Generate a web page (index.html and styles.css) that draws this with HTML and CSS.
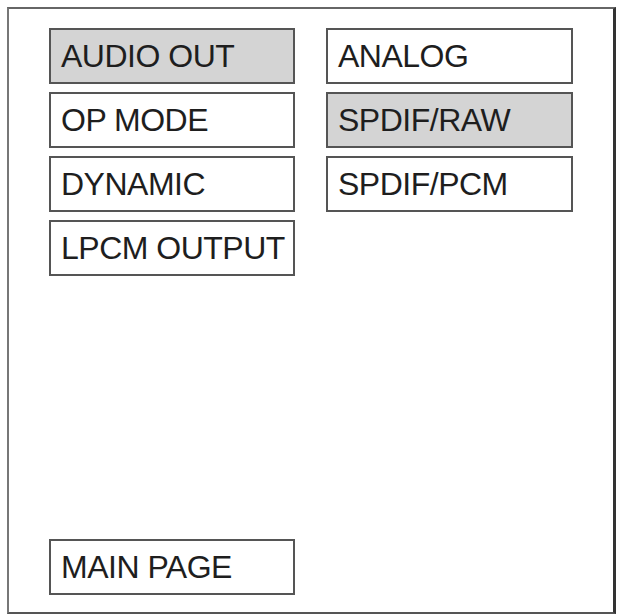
FILE: index.html
```html
<!DOCTYPE html>
<html lang="en">
  <head>
    <meta charset="UTF-8" />
    <meta name="viewport" content="width=device-width, initial-scale=1.0" />
    <title>Audio Setup</title>
    <link rel="stylesheet" href="styles.css">
  </head>
  <body>
    <div class="screen">
      <div class="menus">
        <div class="menu">
          <div class="item selected">AUDIO OUT</div>
          <div class="item">OP MODE</div>
          <div class="item">DYNAMIC</div>
          <div class="item">LPCM OUTPUT</div>
        </div>
        <div class="menu">
          <div class="item">ANALOG</div>
          <div class="item selected">SPDIF/RAW</div>
          <div class="item">SPDIF/PCM</div>
        </div>
      </div>
      <div class="item main-page">MAIN PAGE</div>
    </div>
  </body>
</html>
```

FILE: styles.css
```css
body {
  margin: 0;
  background-color: white;
  font-family: "Liberation Sans", Arial, sans-serif;
  color: #1e1e1e;
}
.screen {
  box-sizing: border-box;
  margin: 7px 0 0 7px;
  width: 609px;
  height: 607px;
  border-top: 2px solid #666;
  border-left: 2px solid #777;
  border-right: 3px solid #333;
  border-bottom: 2px solid #555;
  padding: 19px 0 17px 40px;
  display: flex;
  flex-direction: column;
}
.menus {
  display: grid;
  grid-template-columns: 246px 247px;
  column-gap: 31px;
  align-items: start;
}
.menu {
  display: flex;
  flex-direction: column;
  gap: 8px;
}
.item {
  box-sizing: border-box;
  height: 56px;
  border: 2px solid #555;
  padding-left: 10px;
  display: flex;
  align-items: center;
  font-size: 32px;
  letter-spacing: -0.5px;
  background-color: white;
}
.selected {
  background-color: #d4d4d4;
}
.main-page {
  margin-top: auto;
  width: 246px;
}
```
